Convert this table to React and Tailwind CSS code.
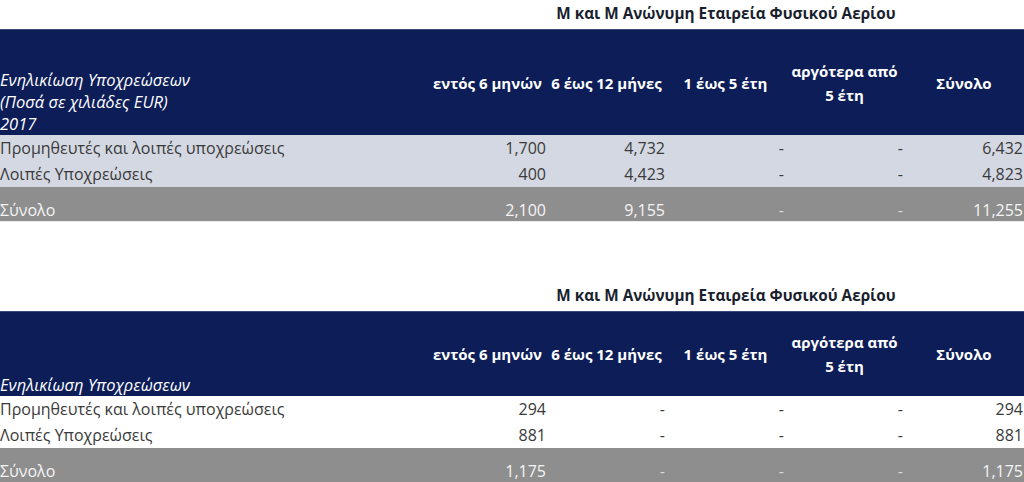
import React from "react";

const FONT = { fontFamily: '"Open Sans", "Noto Sans", "DejaVu Sans", sans-serif' };

function Title({ children }) {
  return (
    <div className="grid grid-cols-[428px_596px] h-[29px] items-center">
      <div />
      <div className="text-center font-bold text-[15.3px] text-[#1a1f2e] leading-[20px] -mt-[3px]">{children}</div>
    </div>
  );
}

function HeaderCells() {
  return (
    <>
      <div className="flex items-center justify-center text-center font-bold text-white text-[15px] leading-[24px] whitespace-nowrap">εντός 6 μηνών</div>
      <div className="flex items-center justify-center text-center font-bold text-white text-[15px] leading-[24px] whitespace-nowrap">6 έως 12 μήνες</div>
      <div className="flex items-center justify-center text-center font-bold text-white text-[15px] leading-[24px] whitespace-nowrap">1 έως 5 έτη</div>
      <div className="flex items-center justify-center text-center font-bold text-white text-[15px] leading-[24px] whitespace-nowrap">αργότερα από<br />5 έτη</div>
      <div className="flex items-center justify-center text-center font-bold text-white text-[15px] leading-[24px] whitespace-nowrap">Σύνολο</div>
    </>
  );
}

function DataRow({ label, values, bg }) {
  return (
    <div className={`grid grid-cols-[428px_119px_119px_119px_119px_120px] h-[26px] items-center text-[16px] text-[#3a3a3a] ${bg}`}>
      <div className="whitespace-nowrap">{label}</div>
      {values.map((v, i) => (
        <div key={i} className="text-right pr-[1px] whitespace-nowrap">{v}</div>
      ))}
    </div>
  );
}

function TotalRow({ values }) {
  return (
    <div className="grid grid-cols-[428px_119px_119px_119px_119px_120px] h-[34px] items-end bg-[#8e8e8e] text-[16px] text-[#f4f4f4] leading-[22px]">
      <div className="whitespace-nowrap">Σύνολο</div>
      {values.map((v, i) => (
        <div key={i} className="text-right pr-[1px] whitespace-nowrap">{v === "-" ? <span className="text-[#d8d8d8]">-</span> : v}</div>
      ))}
    </div>
  );
}

export default function App() {
  return (
    <div className="w-[1024px] h-[482px] bg-white overflow-hidden" style={FONT}>
      {/* Table 1 */}
      <Title>Μ και Μ Ανώνυμη Εταιρεία Φυσικού Αερίου</Title>
      <div className="grid grid-cols-[428px_119px_119px_119px_119px_120px] h-[106px] bg-[#0c1d58] border-t border-[#3a4a7a]">
        <div className="flex flex-col justify-end italic text-white text-[16.5px] leading-[22px]">
          <span>Ενηλικίωση Υποχρεώσεων</span>
          <span>(Ποσά σε χιλιάδες EUR)</span>
          <span>2017</span>
        </div>
        <HeaderCells />
      </div>
      <DataRow bg="bg-[#d4d8e2]" label="Προμηθευτές και λοιπές υποχρεώσεις" values={["1,700", "4,732", "-", "-", "6,432"]} />
      <DataRow bg="bg-[#d4d8e2]" label="Λοιπές Υποχρεώσεις" values={["400", "4,423", "-", "-", "4,823"]} />
      <TotalRow values={["2,100", "9,155", "-", "-", "11,255"]} />

      <div className="h-[61px] border-t border-[#ececec]" />

      {/* Table 2 */}
      <Title>Μ και Μ Ανώνυμη Εταιρεία Φυσικού Αερίου</Title>
      <div className="grid grid-cols-[428px_119px_119px_119px_119px_120px] h-[85px] bg-[#0c1d58] border-t border-[#3a4a7a]">
        <div className="flex flex-col justify-end italic text-white text-[16.5px] leading-[22px]">
          <span>Ενηλικίωση Υποχρεώσεων</span>
        </div>
        <HeaderCells />
      </div>
      <DataRow bg="bg-white" label="Προμηθευτές και λοιπές υποχρεώσεις" values={["294", "-", "-", "-", "294"]} />
      <DataRow bg="bg-white" label="Λοιπές Υποχρεώσεις" values={["881", "-", "-", "-", "881"]} />
      <TotalRow values={["1,175", "-", "-", "-", "1,175"]} />
    </div>
  );
}
